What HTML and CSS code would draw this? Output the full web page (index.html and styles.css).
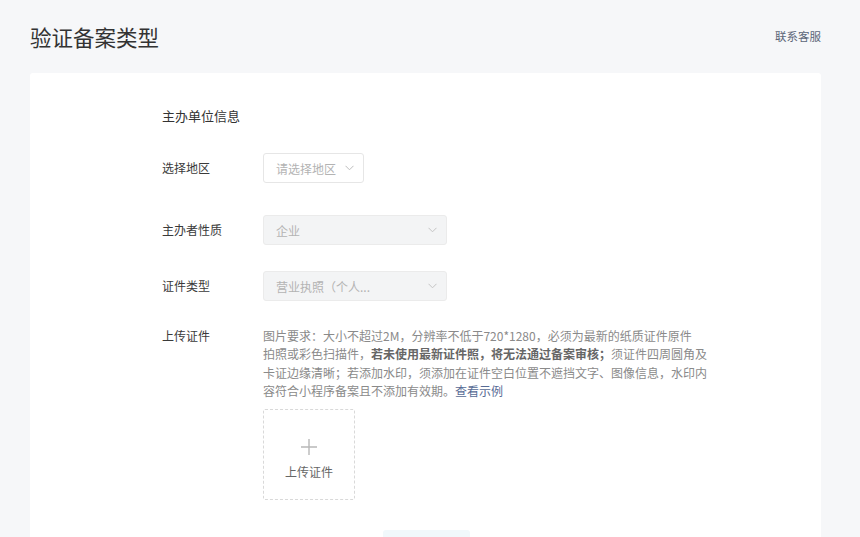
FILE: index.html
```html
<!DOCTYPE html>
<html lang="zh-CN">
<head>
<meta charset="utf-8">
<link rel="stylesheet" href="styles.css">
</head>
<body>
<div class="page">
  <header class="top">
    <h1 class="title">验证备案类型</h1>
    <a class="service">联系客服</a>
  </header>
  <main class="card">
    <div class="form">
      <div class="section">主办单位信息</div>
      <div class="row r1">
        <div class="label">选择地区</div>
        <div class="select small">
          <span class="ph">请选择地区</span>
          <svg class="chev" width="9" height="6" viewBox="0 0 9 6"><path d="M0.5 0.8 L4.5 4.8 L8.5 0.8" fill="none" stroke="#bdbdbd" stroke-width="1"/></svg>
        </div>
      </div>
      <div class="row r2">
        <div class="label">主办者性质</div>
        <div class="select wide disabled">
          <span class="ph">企业</span>
          <svg class="chev" width="9" height="6" viewBox="0 0 9 6"><path d="M0.5 0.8 L4.5 4.8 L8.5 0.8" fill="none" stroke="#c4c4c4" stroke-width="1"/></svg>
        </div>
      </div>
      <div class="row r3">
        <div class="label">证件类型</div>
        <div class="select wide disabled">
          <span class="ph">营业执照（个人...</span>
          <svg class="chev" width="9" height="6" viewBox="0 0 9 6"><path d="M0.5 0.8 L4.5 4.8 L8.5 0.8" fill="none" stroke="#c4c4c4" stroke-width="1"/></svg>
        </div>
      </div>
      <div class="row upload-row">
        <div class="label">上传证件</div>
        <div class="upload">
          <p class="desc">图片要求：大小不超过2M，分辨率不低于720*1280，必须为最新的纸质证件原件<br>拍照或彩色扫描件，<b>若未使用最新证件照，将无法通过备案审核；</b>须证件四周圆角及<br>卡证边缘清晰；若添加水印，须添加在证件空白位置不遮挡文字、图像信息，水印内<br>容符合小程序备案且不添加有效期。<a class="link">查看示例</a></p>
          <div class="box">
            <svg class="plus" width="16" height="16" viewBox="0 0 16 16"><path d="M8 0 V16 M0 8 H16" stroke="#b8b8b8" stroke-width="1.4"/></svg>
            <span class="box-text">上传证件</span>
          </div>
        </div>
      </div>
      <div class="actions">
        <div class="btn"></div>
      </div>
    </div>
  </main>
</div>
</body>
</html>
```
FILE: styles.css
```css
* { box-sizing: border-box; }
html, body { margin: 0; padding: 0; }
body {
  background: #f6f7f9;
  font-family: "Noto Sans CJK SC", "Noto Sans", sans-serif;
  color: #333;
  width: 860px;
  height: 537px;
  overflow: hidden;
}
.page { padding: 0 39px 0 30px; }
.top {
  display: flex;
  justify-content: space-between;
  align-items: center;
  height: 73px;
}
.title {
  margin: 0;
  font-size: 21.5px;
  font-weight: 400;
  color: #333;
  line-height: 28px;
  margin-top: 1px;
}
.service {
  font-size: 11.5px;
  color: #5b6578;
  margin-top: -2px;
}
.card {
  background: #fff;
  border-radius: 3px;
  height: 480px;
  padding: 34px 0 0 132px;
}
.section {
  font-size: 13px;
  line-height: 18px;
  color: #333;
}
.row { display: flex; align-items: center; }
.r1 { margin-top: 28px; }
.r2 { margin-top: 32px; }
.r3 { margin-top: 26px; }
.upload-row { margin-top: 26px; align-items: flex-start; }
.label {
  width: 101px;
  font-size: 12px;
  color: #3a3a3a;
  line-height: 18px;
}
.select {
  height: 30px;
  border: 1px solid #e6e6e6;
  border-radius: 3px;
  display: flex;
  align-items: center;
  justify-content: space-between;
  padding: 0 9px 0 12px;
  background: #fff;
}
.select.small { width: 101px; }
.select.wide { width: 184px; }
.select.disabled { background: #f3f4f5; border-color: #ebebeb; }
.ph { font-size: 12px; color: #b3b3b3; }
.chev { display: block; }
.upload { display: flex; flex-direction: column; }
.desc {
  margin: 0;
  font-size: 12px;
  line-height: 18.4px;
  color: #8a8a8a;
  white-space: nowrap;
}
.desc b { font-weight: 700; color: #666; }
.link { color: #576b95; }
.box {
  margin-top: 8px;
  width: 92px;
  height: 91px;
  border: 1px dashed #d9d9d9;
  border-radius: 2px;
  display: flex;
  flex-direction: column;
  align-items: center;
  padding-top: 29px;
}
.plus { display: block; }
.box-text { margin-top: 9px; font-size: 12px; color: #666; line-height: 16px; }
.actions { padding-left: 221px; margin-top: 30px; }
.btn {
  width: 87px;
  height: 32px;
  border-radius: 3px;
  background: #f1f8fb;
}
```
